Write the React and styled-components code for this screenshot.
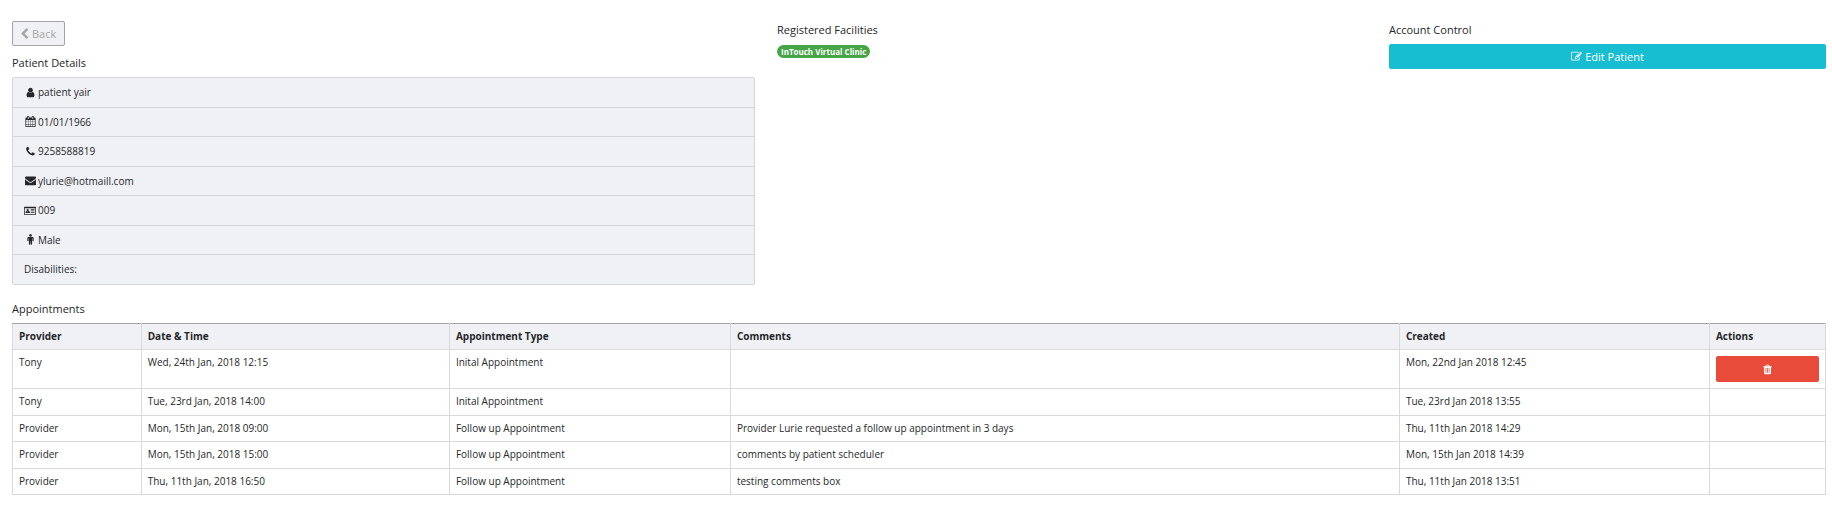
import React from 'react';
import styled, { createGlobalStyle } from 'styled-components';

const GlobalStyle = createGlobalStyle`
  *, *::before, *::after { box-sizing: border-box; }
  body {
    margin: 0;
    background: #fff;
    color: #25272a;
    font-family: 'Open Sans', 'Noto Sans', sans-serif;
    font-size: 10px;
    line-height: 1.65;
  }
`;

const GUTTER = '22px';
const span = (n) => `calc((100% + ${GUTTER}) * ${n} / 12 - ${GUTTER})`;

const Page = styled.main`
  padding: 21px 6px 24px 12px;
`;

const Columns = styled.div`
  display: grid;
  grid-template-columns: ${span(5)} ${span(4)} ${span(3)};
  column-gap: ${GUTTER};
  align-items: start;
`;

const Heading = styled.h2`
  margin: 0 0 5px;
  font-size: 11px;
  font-weight: 500;
  line-height: 18px;
`;

const Button = styled.button`
  display: inline-flex;
  align-items: center;
  justify-content: center;
  gap: 3px;
  height: 25px;
  padding: 0 8px;
  border: 1px solid ${(p) => p.$border || p.$color};
  border-radius: 2px;
  background: ${(p) => p.$color};
  color: ${(p) => p.$text || '#fff'};
  font: inherit;
  font-size: 11px;
  line-height: 18px;
  width: ${(p) => (p.$block ? '100%' : 'auto')};
  cursor: pointer;
`;

const BackButton = styled(Button)`
  display: flex;
  margin-bottom: 8px;
`;

const DeleteButton = styled(Button)`
  display: flex;
  height: 26px;
`;

const Badge = styled.span`
  display: block;
  width: fit-content;
  margin-top: 6px;
  padding: 0 4px;
  border-radius: 7px;
  background: #46a546;
  color: #fff;
  font-size: 8px;
  font-weight: 700;
  line-height: 13px;
`;

const DetailList = styled.ul`
  margin: 0;
  padding: 0;
  list-style: none;
`;

const DetailItem = styled.li`
  display: flex;
  align-items: center;
  gap: 2px;
  margin-bottom: -1px;
  padding: 6px 11px;
  border: 1px solid #d3d6d9;
  background: #f0f1f5;

  &:first-child { border-radius: 2px 2px 0 0; }
  &:last-child { margin-bottom: 0; border-radius: 0 0 2px 2px; }
`;

const IconSlot = styled.span`
  display: inline-flex;
  justify-content: center;
  width: 12px;
`;

const Appointments = styled.section`
  margin-top: 15px;
`;

const Table = styled.table`
  width: 100%;
  table-layout: fixed;
  border-collapse: collapse;
  line-height: 1.35;

  th, td {
    padding: 6px;
    border: 1px solid #d9d9d9;
    text-align: left;
    vertical-align: top;
  }
  th {
    border-top-color: #a4a4a4;
    background: #f0f1f5;
    font-weight: 700;
  }
`;

const Col = styled.col`
  width: ${(p) => p.$width};
`;

const Svg = styled.svg`
  display: block;
  flex: none;
  fill: currentColor;
`;

const ICONS = {
  back: 'M1427 301l-531 531 531 531q19 19 19 45t-19 45l-166 166q-19 19-45 19t-45-19l-742-742q-19-19-19-45t19-45l742-742q19-19 45-19t45 19l166 166q19 19 19 45t-19 45z',
  user: 'M1536 1399q0 109-62.5 187t-150.5 78h-854q-88 0-150.5-78t-62.5-187q0-85 8.5-160.5t31.5-152 58.5-131 94-89 134.5-34.5q131 128 313 128t313-128q76 0 134.5 34.5t94 89 58.5 131 31.5 152 8.5 160.5zm-256-887q0 159-112.5 271.5t-271.5 112.5-271.5-112.5-112.5-271.5 112.5-271.5 271.5-112.5 271.5 112.5 112.5 271.5z',
  calendar: 'M192 1664h288v-288h-288v288zm352 0h320v-288h-320v288zm-352-352h288v-320h-288v320zm352 0h320v-320h-320v320zm-352-384h288v-288h-288v288zm736 736h320v-288h-320v288zm-384-736h320v-288h-320v288zm768 736h288v-288h-288v288zm-384-352h320v-320h-320v320zm-352-864v-288q0-13-9.5-22.5t-22.5-9.5h-64q-13 0-22.5 9.5t-9.5 22.5v288q0 13 9.5 22.5t22.5 9.5h64q13 0 22.5-9.5t9.5-22.5zm736 864h288v-320h-288v320zm-384-384h320v-288h-320v288zm384 0h288v-288h-288v288zm32-480v-288q0-13-9.5-22.5t-22.5-9.5h-64q-13 0-22.5 9.5t-9.5 22.5v288q0 13 9.5 22.5t22.5 9.5h64q13 0 22.5-9.5t9.5-22.5zm384-64v1280q0 52-38 90t-90 38h-1408q-52 0-90-38t-38-90v-1280q0-52 38-90t90-38h128v-96q0-66 47-113t113-47h64q66 0 113 47t47 113v96h384v-96q0-66 47-113t113-47h64q66 0 113 47t47 113v96h128q52 0 90 38t38 90z',
  phone: 'M1600 1240q0 27-10 70.5t-21 68.5q-21 50-122 106-94 51-186 51-27 0-53-3.5t-57.5-12.5-47-14.5-55.5-20.5-49-18q-98-35-175-83-127-79-264-216t-216-264q-48-77-83-175-3-9-18-49t-20.5-55.5-14.5-47-12.5-57.5-3.5-53q0-92 51-186 56-101 106-122 25-11 68.5-21t70.5-10q14 0 21 3 18 6 53 76 11 19 30 54t35 63.5 31 53.5q3 4 17.5 25t21.5 35.5 7 28.5q0 20-28.5 50t-62 55-62 53-28.5 46q0 9 5 22.5t8.5 20.5 14 24 11.5 19q76 137 174 235t235 174q2 1 19 11.5t24 14 20.5 8.5 22.5 5q18 0 46-28.5t53-62 55-62 50-28.5q14 0 28.5 7t35.5 21.5 25 17.5q25 15 53.5 31t63.5 35 54 30q70 35 76 53 3 7 3 21z',
  envelope: 'M1792 710v794q0 66-47 113t-113 47h-1472q-66 0-113-47t-47-113v-794q44 49 101 87 362 246 497 345 57 42 92.5 65.5t94.5 48 110 24.5h2q51 0 110-24.5t94.5-48 92.5-65.5q170-123 498-345 57-39 100-87zm0-294q0 79-49 151t-122 123q-376 261-468 325-10 7-42.5 31t-54 38.5-52 32.5-57.5 27-50 9h-2q-23 0-50-9t-57.5-27-52-32.5-54-38.5-42.5-31q-91-64-262-182.5t-205-142.5q-62-42-117-115.5t-55-136.5q0-78 41.5-130t118.5-52h1472q65 0 112.5 47t47.5 113z',
  card: 'M160 256h1728q66 0 113 47t47 113v1088q0 66-47 113t-113 47h-1728q-66 0-113-47t-47-113v-1088q0-66 47-113t113-47zm-32 256v992q0 32 32 32h1728q32 0 32-32v-992zM640 640a190 190 0 0 1 0 380a190 190 0 0 1 0-380zM256 1280q0-240 180-290q90 80 204 80t204-80q180 50 180 290v0q0 40-40 40h-688q-40 0-40-40zM1152 640h640v128h-640zM1152 896h640v128h-640zM1152 1152h640v128h-640z',
  male: 'M1408 672v416q0 40-28 68t-68 28-68-28-28-68v-352h-64v912q0 46-33 79t-79 33-79-33-33-79v-464h-64v464q0 46-33 79t-79 33-79-33-33-79v-912h-64v352q0 40-28 68t-68 28-68-28-28-68v-416q0-80 56-136t136-56h640q80 0 136 56t56 136zm-288-448q0 93-65.5 158.5t-158.5 65.5-158.5-65.5-65.5-158.5 65.5-158.5 158.5-65.5 158.5 65.5 65.5 158.5z',
  edit: 'M888 1184l116-116-152-152-116 116v56h96v96h56zm440-720q-16-16-33 1l-350 350q-17 17-1 33t33-1l350-350q17-17 1-33zm80 594v190q0 119-84.5 203.5t-203.5 84.5h-832q-119 0-203.5-84.5t-84.5-203.5v-832q0-119 84.5-203.5t203.5-84.5h832q63 0 117 25 15 7 18 23 3 17-9 29l-49 49q-14 14-32 8-23-6-45-6h-832q-66 0-113 47t-47 113v832q0 66 47 113t113 47h832q66 0 113-47t47-113v-126q0-13 9-22l64-64q15-15 35-7t20 29zm-96-738l288 288-672 672h-288v-288zm444 132l-92 92-288-288 92-92q28-28 68-28t68 28l152 152q28 28 28 68t-28 68z',
  trash: 'M704 1376v-704q0-14-9-23t-23-9h-64q-14 0-23 9t-9 23v704q0 14 9 23t23 9h64q14 0 23-9t9-23zm256 0v-704q0-14-9-23t-23-9h-64q-14 0-23 9t-9 23v704q0 14 9 23t23 9h64q14 0 23-9t9-23zm256 0v-704q0-14-9-23t-23-9h-64q-14 0-23 9t-9 23v704q0 14 9 23t23 9h64q14 0 23-9t9-23zm-544-992h448l-48-117q-7-9-17-11h-317q-10 2-17 11zm928 32v64q0 14-9 23t-23 9h-96v948q0 83-47 143.5t-113 60.5h-832q-66 0-113-58.5t-47-141.5v-952h-96q-14 0-23-9t-9-23v-64q0-14 9-23t23-9h309l70-167q15-37 54-63t79-26h320q40 0 79 26t54 63l70 167h309q14 0 23 9t9 23z',
};

// Each icon is drawn on its own view box: [x, y, width, height, drawn width, drawn height]
const BOXES = {
  back: [384, 0, 1152, 1792, 8, 12],
  card: [0, 0, 2048, 1792, 12, 11],
};

function Icon({ name }) {
  const [x, y, w, h, width, height] = BOXES[name] || [0, 0, 1792, 1792, 11, 11];
  return (
    <Svg aria-hidden="true" width={width} height={height} viewBox={`${x} ${y} ${w} ${h}`}>
      <path d={ICONS[name]} fillRule={name === 'card' ? 'evenodd' : 'nonzero'} />
    </Svg>
  );
}

const DETAILS = [
  ['user', 'patient yair'],
  ['calendar', '01/01/1966'],
  ['phone', '9258588819'],
  ['envelope', 'ylurie@hotmaill.com'],
  ['card', '009'],
  ['male', 'Male'],
  [null, 'Disabilities:'],
];

const COLUMNS = [
  ['Provider', '7.1%'],
  ['Date & Time', '17%'],
  ['Appointment Type', '15.5%'],
  ['Comments', '36.9%'],
  ['Created', '17.1%'],
  ['Actions', '6.4%'],
];

const ROWS = [
  ['Tony', 'Wed, 24th Jan, 2018 12:15', 'Inital Appointment', '', 'Mon, 22nd Jan 2018 12:45', true],
  ['Tony', 'Tue, 23rd Jan, 2018 14:00', 'Inital Appointment', '', 'Tue, 23rd Jan 2018 13:55', false],
  ['Provider', 'Mon, 15th Jan, 2018 09:00', 'Follow up Appointment', 'Provider Lurie requested a follow up appointment in 3 days', 'Thu, 11th Jan 2018 14:29', false],
  ['Provider', 'Mon, 15th Jan, 2018 15:00', 'Follow up Appointment', 'comments by patient scheduler', 'Mon, 15th Jan 2018 14:39', false],
  ['Provider', 'Thu, 11th Jan, 2018 16:50', 'Follow up Appointment', 'testing comments box', 'Thu, 11th Jan 2018 13:51', false],
];

export default function App() {
  return (
    <Page>
      <GlobalStyle />
      <Columns>
        <section>
          <BackButton type="button" $color="#f0f1f5" $border="#a4a4a4" $text="#a4a4a4">
            <Icon name="back" />
            Back
          </BackButton>
          <Heading>Patient Details</Heading>
          <DetailList>
            {DETAILS.map(([icon, text]) => (
              <DetailItem key={text}>
                {icon && <IconSlot><Icon name={icon} /></IconSlot>}
                {text}
              </DetailItem>
            ))}
          </DetailList>
        </section>
        <section>
          <Heading>Registered Facilities</Heading>
          <Badge>InTouch Virtual Clinic</Badge>
        </section>
        <section>
          <Heading>Account Control</Heading>
          <Button type="button" $block $color="#17bdd1">
            <Icon name="edit" />
            Edit Patient
          </Button>
        </section>
      </Columns>
      <Appointments>
        <Heading id="appointments">Appointments</Heading>
        <Table aria-labelledby="appointments">
          <colgroup>
            {COLUMNS.map(([label, width]) => <Col key={label} $width={width} />)}
          </colgroup>
          <thead>
            <tr>{COLUMNS.map(([label]) => <th key={label} scope="col">{label}</th>)}</tr>
          </thead>
          <tbody>
            {ROWS.map(([provider, date, type, comments, created, canDelete]) => (
              <tr key={date}>
                <td>{provider}</td>
                <td>{date}</td>
                <td>{type}</td>
                <td>{comments}</td>
                <td>{created}</td>
                <td>
                  {canDelete && (
                    <DeleteButton type="button" $block $color="#e94b3a" aria-label="Delete appointment">
                      <Icon name="trash" />
                    </DeleteButton>
                  )}
                </td>
              </tr>
            ))}
          </tbody>
        </Table>
      </Appointments>
    </Page>
  );
}
